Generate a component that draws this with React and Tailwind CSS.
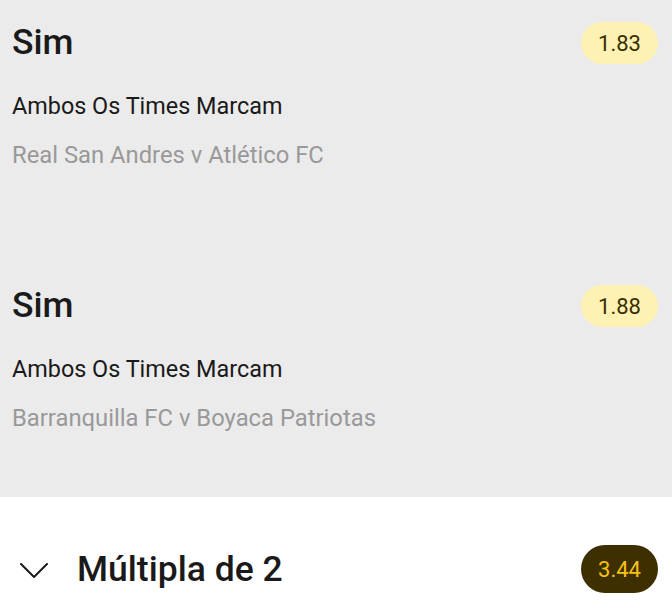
const bets = [
  { pick: 'Sim', market: 'Ambos Os Times Marcam', event: 'Real San Andres v Atlético FC', odds: '1.83' },
  { pick: 'Sim', market: 'Ambos Os Times Marcam', event: 'Barranquilla FC v Boyaca Patriotas', odds: '1.88' },
]

function BetRow({ bet }) {
  return (
    <div className="h-[263px] shrink-0 px-3 pt-[20px]">
      <div className="flex items-start justify-between">
        <div>
          <h2 className="text-[35.5px] leading-[44px] font-medium text-[#1a1a1a]">{bet.pick}</h2>
          <p className="mt-[27px] text-[23.4px] leading-[30px] text-[#1a1a1a]">{bet.market}</p>
          <p className="mt-[19px] text-[23.8px] leading-[30px] text-[#999999]">{bet.event}</p>
        </div>
        <span className="mt-[2px] mr-[2px] rounded-full bg-[#fdf1b4] px-[17px] h-[42px] flex items-center text-[22px] text-[#3a2f00]">
          {bet.odds}
        </span>
      </div>
    </div>
  )
}

export default function App() {
  return (
    <div className="w-[672px] h-[610px] overflow-hidden bg-white" style={{ fontFamily: 'Roboto, sans-serif' }}>
      {/* Selections */}
      <div className="bg-[#ebebeb] h-[497px] overflow-hidden">
        {bets.map((bet, i) => (
          <BetRow key={i} bet={bet} />
        ))}
      </div>

      {/* Multiple footer */}
      <div className="flex items-center justify-between pl-[20px] pr-[14px] pt-[48px]">
        <div className="flex items-center gap-[29px]">
          <svg width="28" height="15" viewBox="0 0 28 15" fill="none" className="mt-[2px]">
            <polyline points="1,1 14,14 27,1" stroke="#1a1a1a" strokeWidth="2" strokeLinecap="round" strokeLinejoin="round" />
          </svg>
          <span className="text-[35.5px] font-medium text-[#1a1a1a] leading-[44px]">Múltipla de 2</span>
        </div>
        <span className="rounded-full bg-[#3d2f00] px-[17px] h-[48px] flex items-center text-[22px] text-[#f5c20f]">3.44</span>
      </div>
    </div>
  )
}
